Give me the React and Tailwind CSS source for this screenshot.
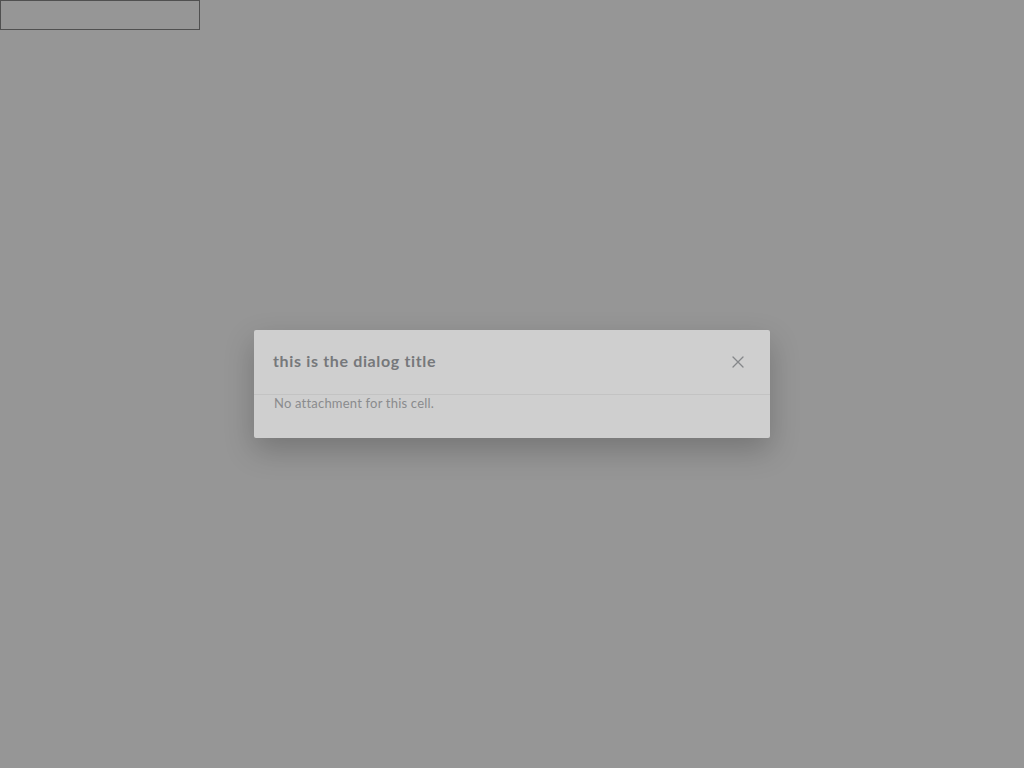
import React from "react";

const CloseIcon = () => (
  <svg width="12" height="12" viewBox="0 0 12 12" fill="none">
    <path d="M1 1L11 11M11 1L1 11" stroke="#85878a" strokeWidth="1.3" strokeLinecap="round" />
  </svg>
);

const App = () => {
  return (
    <div
      className="min-h-screen w-full bg-[#969696] flex flex-col"
      style={{ fontFamily: "Lato, 'Open Sans', sans-serif" }}
    >
      {/* placeholder box top-left */}
      <div className="w-[200px] h-[30px] border border-[#505050]" />

      {/* dialog */}
      <div className="flex justify-center pt-[300px]">
        <div className="w-[516px] h-[108px] bg-[#cfcfcf] rounded-[2px] shadow-[0_12px_30px_rgba(0,0,0,0.22)] flex flex-col">
          <div className="h-[65px] flex items-center justify-between pl-[19px] pr-[26px] border-b border-[#c3c3c3]">
            <h2 className="text-[16px] font-bold text-[#76787b] tracking-[0.65px] pb-[2px]">
              this is the dialog title
            </h2>
            <button className="flex items-center justify-center pb-[1px]">
              <CloseIcon />
            </button>
          </div>
          <div className="pl-[20px] -mt-[1px]">
            <p className="text-[13px] text-[#8a8b8d] tracking-[0.2px]">No attachment for this cell.</p>
          </div>
        </div>
      </div>
    </div>
  );
};

export default App;
